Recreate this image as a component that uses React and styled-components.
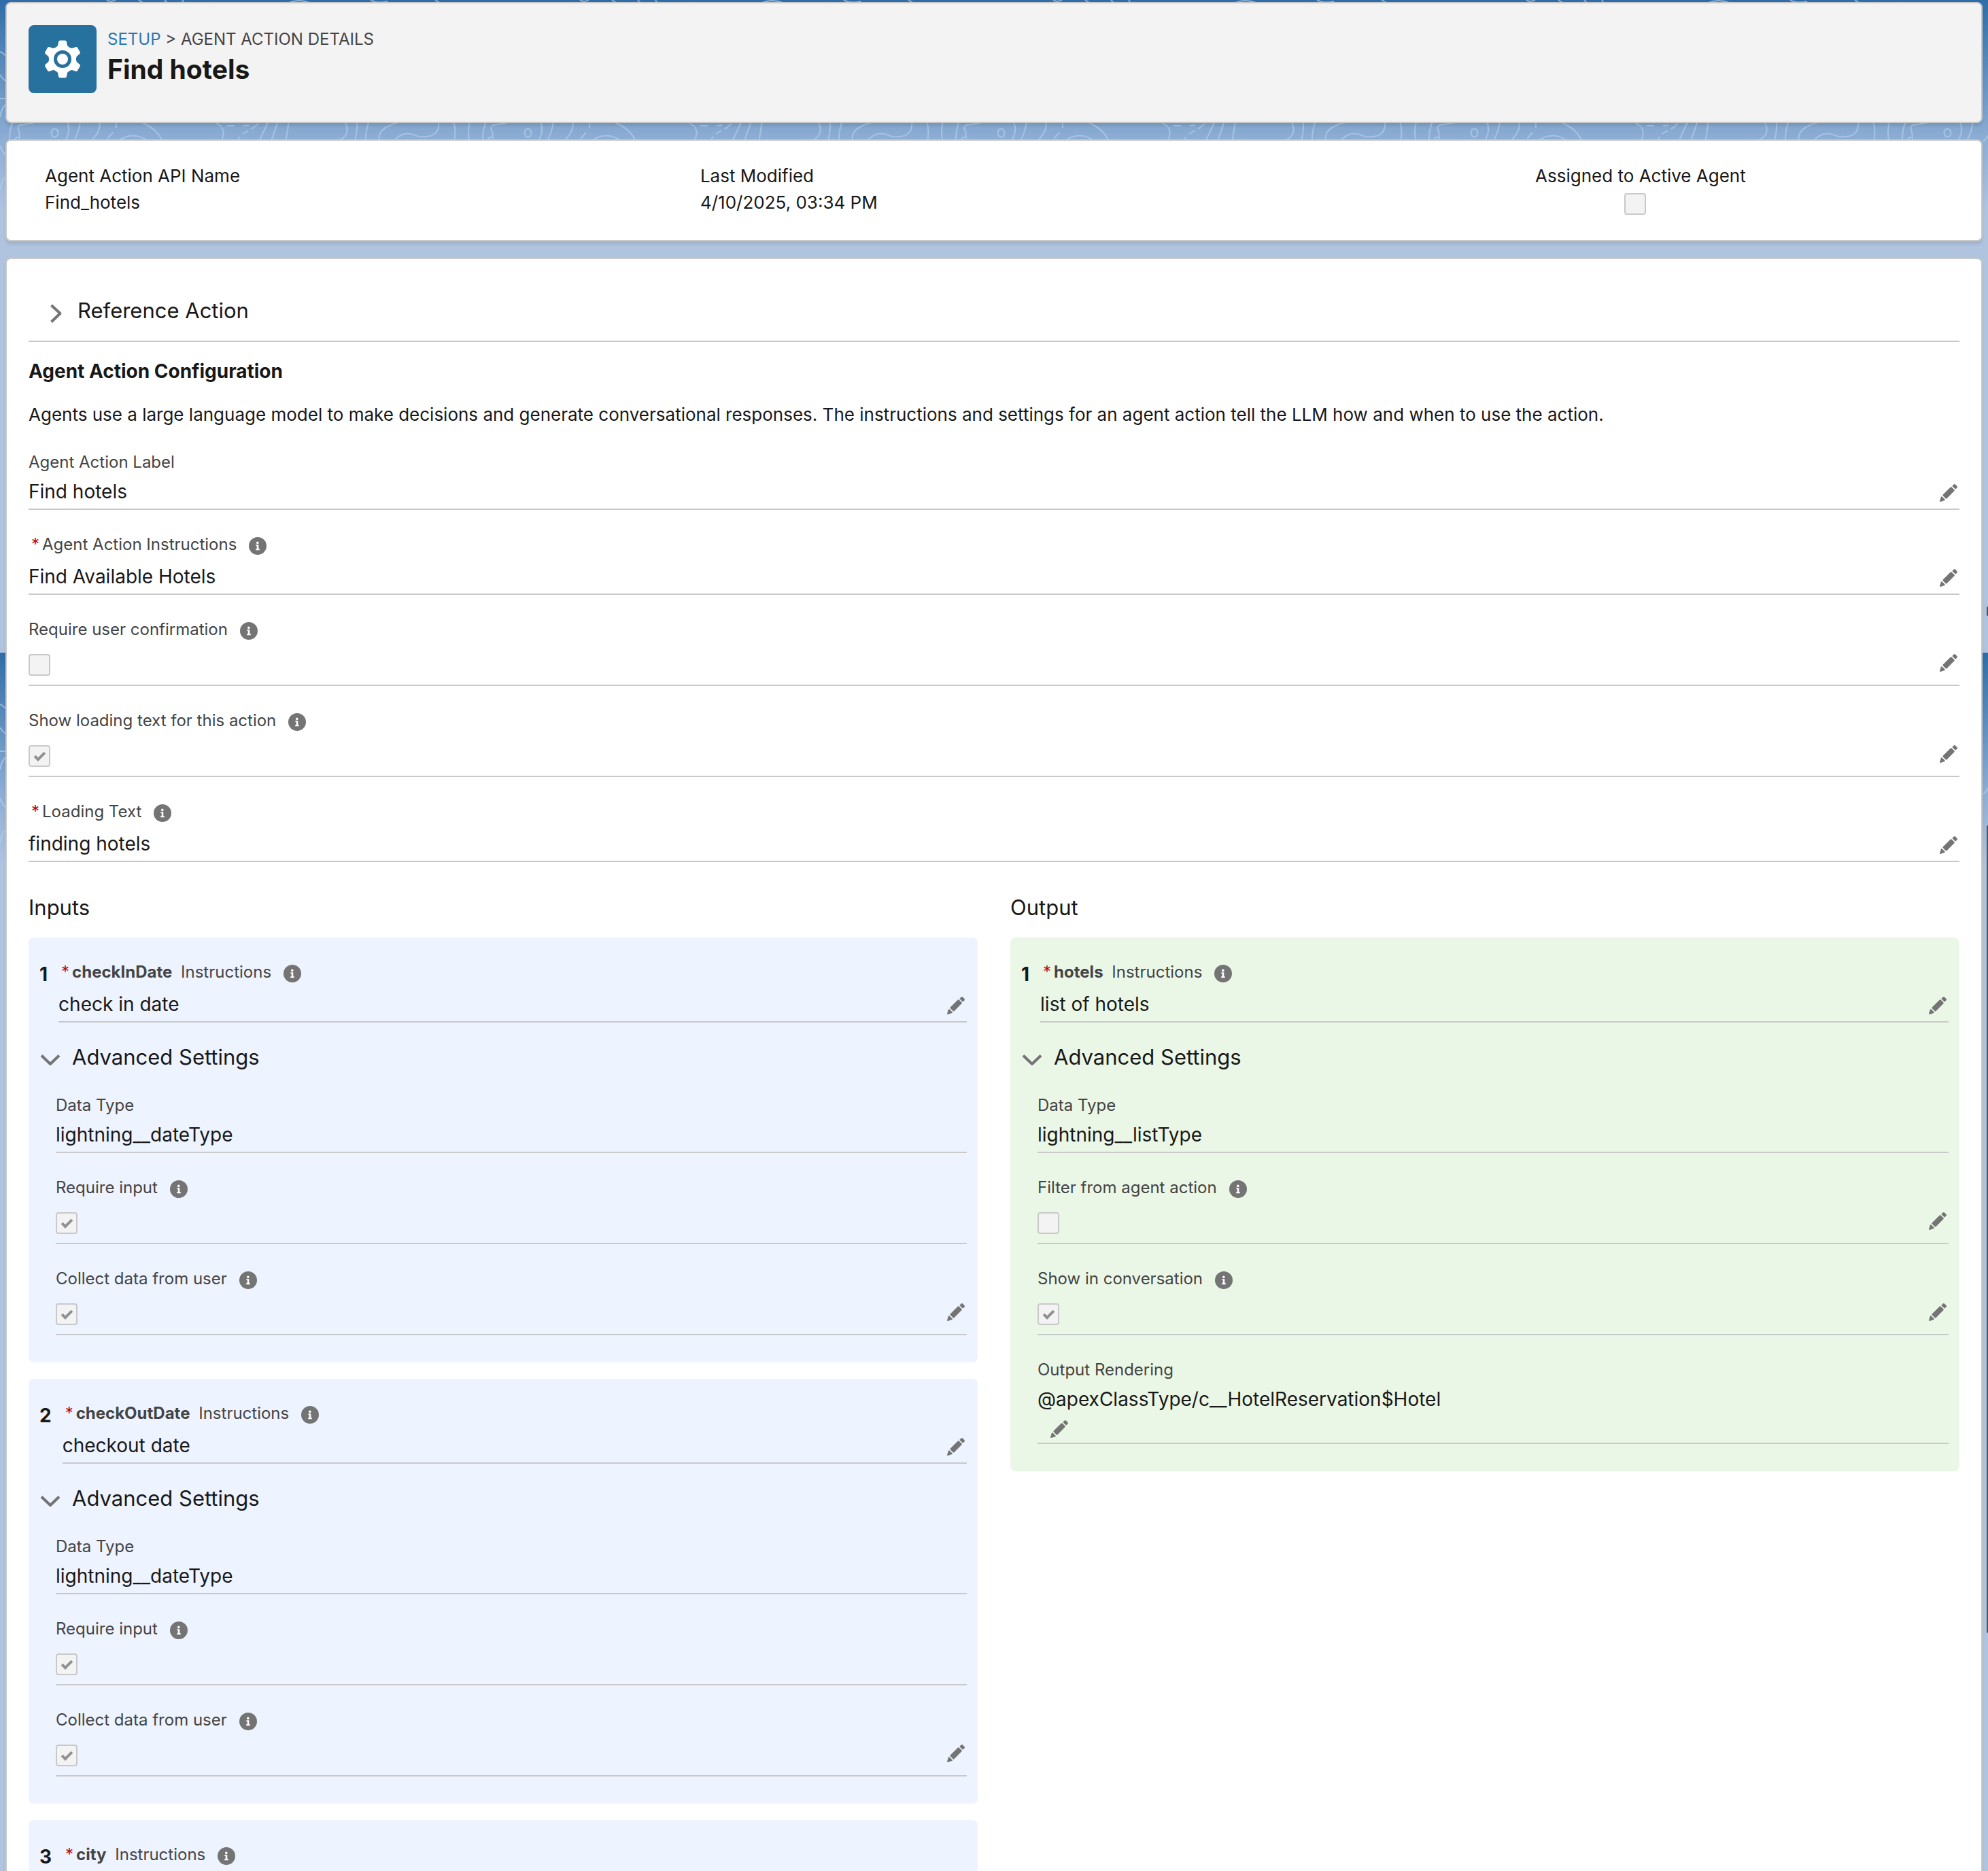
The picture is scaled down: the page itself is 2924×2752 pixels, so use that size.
import React, { useId } from "react";
import styled, { createGlobalStyle } from "styled-components";

const GlobalStyle = createGlobalStyle`
    * {
        box-sizing: border-box;
    }

    body {
        margin: 0;
        background-color: #b0c4df;
        color: #181818;
        font-family: Inter, "Liberation Sans", sans-serif;
        font-size: 26px;
        line-height: 39px;
    }

    h1, h2, h3, p {
        margin: 0;
        font-weight: 400;
    }

    button {
        background: none;
        border: 0;
        color: inherit;
        cursor: pointer;
        font: inherit;
        padding: 0;
        text-align: left;
    }

    svg {
        display: block;
    }
`;

const Page = styled.div`
    display: flex;
    flex-direction: column;
    gap: 24px;
    height: 100vh;
    overflow: hidden;
    padding: 3px 8px 0;
    position: relative;
`;

const Backdrop = styled.div`
    background: linear-gradient(#2f6da8, #8bacd3 200px, #b0c4df 310px);
    height: 320px;
    left: 0;
    position: absolute;
    right: 0;
    top: ${props => props.$top}px;
    z-index: -1;
`;

const ScrollThumb = styled.div`
    background-color: #4a5562;
    border-radius: 2px 0 0 2px;
    height: ${props => props.$height}px;
    position: absolute;
    right: 0;
    top: ${props => props.$top}px;
    width: 2px;
`;

const Card = styled.section`
    background-color: #fff;
    border: 2px solid #c9c9c9;
    border-radius: 8px;
    box-shadow: 0 4px 4px rgba(0, 0, 0, 0.1);
`;

const HeaderCard = styled(Card)`
    background-color: #f3f3f3;
    display: flex;
    gap: 16px;
    padding: 32px 32px 42px;
`;

const HeaderIcon = styled.div`
    background-color: #27719e;
    border-radius: 8px;
    height: 100px;
    width: 100px;
`;

const HeaderText = styled.div`
    padding-top: 2px;
`;

const Breadcrumb = styled.nav`
    color: #444;
    font-size: 24px;
    line-height: 38px;

    a {
        color: #2a76b0;
        text-decoration: none;
    }
`;

const Title = styled.h1`
    font-size: 39px;
    font-weight: 700;
    line-height: 50px;
`;

const SummaryCard = styled(Card)`
    display: grid;
    grid-template-columns: 23fr 23fr 20fr;
    padding: 32px 82px 36px 56px;
`;

const SummaryCheck = styled.div`
    align-items: center;
    display: flex;
    flex-direction: column;
    gap: 6px;
`;

const DetailCard = styled(Card)`
    flex: 1;
    padding: 32px;
`;

const SectionHeader = styled.div`
    border-bottom: 2px solid #c9c9c9;
    padding: 20px 0 20px 24px;
`;

const Toggle = styled.button`
    align-items: center;
    display: flex;
    font-size: 31px;
    gap: 16px;
    line-height: 48px;
`;

const ConfigTitle = styled.h2`
    font-size: 28px;
    font-weight: 700;
    line-height: 42px;
    margin: 22px 0 23px;
`;

const FieldBox = styled.div`
    border-bottom: 2px solid #c9c9c9;
    margin-top: ${props => (props.$first ? 0 : 32)}px;
    padding-bottom: 3px;
`;

const LabelRow = styled.div`
    color: #444;
    display: flex;
    font-size: 24px;
    line-height: 38px;
    margin-bottom: 2px;

    strong {
        margin-right: 6px;
    }
`;

const Required = styled.abbr`
    color: #ba0517;
    margin: 0 4px;
    text-decoration: none;
`;

const InfoButton = styled.button`
    height: 26px;
    margin: 8px 0 8px 18px;
`;

const ValueRow = styled.div`
    display: flex;
    flex-direction: ${props => (props.$wrap ? "column" : "row")};
    justify-content: space-between;
`;

const Value = styled.span`
    font-size: 28px;
    line-height: 44px;
`;

const EditButton = styled.button`
    height: 26px;
    margin: ${props => (props.$wrap ? "9px 0 4px 19px" : "11px 3px 0 0")};
    width: 26px;
`;

const Checkbox = styled.input`
    appearance: none;
    background-color: #f3f3f3;
    border: 2px solid #c9c9c9;
    border-radius: 4px;
    display: grid;
    height: 32px;
    margin: 0;
    place-items: center;
    width: 32px;

    &:checked::after {
        border: solid #919191;
        border-width: 0 4px 4px 0;
        box-sizing: border-box;
        content: "";
        height: 16px;
        margin-bottom: 2px;
        transform: rotate(45deg);
        width: 9px;
    }
`;

const SummaryCheckbox = styled(Checkbox)`
    margin-right: 16px;
`;

const FieldCheckbox = styled(Checkbox)`
    margin: 11px 0 10px;
`;

const Columns = styled.div`
    align-items: start;
    display: grid;
    gap: 48px;
    grid-template-columns: 1fr 1fr;
    margin-top: 43px;
`;

const ColumnTitle = styled.h2`
    font-size: 31px;
    line-height: 48px;
    margin-bottom: 20px;
`;

const PanelList = styled.div`
    display: grid;
    gap: 24px;
`;

const Panel = styled.article`
    background-color: ${props => (props.$output ? "#ebf7e6" : "#edf3ff")};
    border-radius: 8px;
    padding: 32px 16px 40px;
`;

const PanelHead = styled.div`
    display: flex;
    gap: 16px;
`;

const PanelNumber = styled.span`
    font-size: 28px;
    font-weight: 700;
    line-height: 44px;
`;

const PanelField = styled.div`
    flex: 1;
`;

const PanelToggle = styled(Toggle)`
    margin: 27px 0 28px;
`;

const PanelBody = styled.div`
    padding-left: 24px;
`;

const GearIcon = () => (
    <svg viewBox="0 0 100 100" width="100" height="100" aria-hidden="true">
        <g fill="#fff" stroke="#fff" strokeWidth="5" strokeLinejoin="round">
            <circle cx="50" cy="50" r="17.5" />
            {[0, 60, 120, 180, 240, 300].map(angle => (
                <path
                    key={angle}
                    d="M41 36 L45.5 31 L46.5 25 H53.5 L54.5 31 L59 36 Z"
                    transform={`rotate(${angle} 50 50)`}
                />
            ))}
        </g>
        <circle cx="50" cy="50" r="10.5" fill="#fff" stroke="#27719e" strokeWidth="5" />
    </svg>
);

const PencilIcon = () => (
    <svg viewBox="0 0 26 26" width="26" height="26" fill="#747474" aria-hidden="true">
        <path d="M18.9 2.2 L20.5 .7 Q21.9 -.5 23.2 .7 L25.4 2.9 Q26.6 4.2 25.4 5.5 L23.8 7.1 Q23.1 7.7 22.4 7.1 L18.9 3.6 Q18.2 2.9 18.9 2.2 Z" />
        <path d="M15.9 4.5 Q16.7 3.8 17.5 4.5 L21.5 8.5 Q22.3 9.3 21.5 10.1 L10.4 21.2 Q9.6 22 8.8 21.2 L4.8 17.2 Q4 16.4 4.8 15.6 Z" />
        <path d="M1.9 18.8 Q2.5 17.7 3.5 18.6 L7.5 22.6 Q8.3 23.6 7.2 24.1 L1.2 25.9 Q-.2 26.2 .1 24.8 Z" />
    </svg>
);

const InfoIcon = () => (
    <svg viewBox="0 0 26 26" width="26" height="26" aria-hidden="true">
        <circle cx="13" cy="13" r="13" fill="#747474" />
        <circle cx="12.8" cy="8.4" r="1.8" fill="#fff" />
        <path d="M10.4 11.3 H14.3 V17.3 H15.8 V19.2 H10.2 V17.3 H11.7 V13.1 H10.4 Z" fill="#fff" />
    </svg>
);

const Chevron = ({ open }) => (
    <svg viewBox="0 0 32 32" width="32" height="32" overflow="visible" aria-hidden="true">
        <polyline
            points={open ? "3,13.5 16,26 29,13.5" : "9.5,8 22.5,20 9.5,32.5"}
            fill="none"
            stroke="#747474"
            strokeWidth="4"
            strokeLinejoin="round"
        />
    </svg>
);

const Contours = () => {
    const id = useId();
    return (
        <svg width="100%" height="320" aria-hidden="true">
            <defs>
                <pattern id={id} width="696" height="320" patternUnits="userSpaceOnUse">
                    <g fill="none" stroke="#b4cdea" strokeOpacity=".7" strokeWidth="2">
                        <path d="M60 178 Q40 183 29 184 Q24 187 28 193 L29 203 Q24 199 21 207" />
                        <path d="M20 176 Q13 192 14 210" />
                        <ellipse cx="80.5" cy="195.5" rx="5" ry="6" />
                        <path d="M98 178 Q106 192 94 210" />
                        <path d="M118 178 Q116 196 107 210" />
                        <path d="M146 178 Q150 192 133 208" />
                        <path d="M171 180 V188 M166 195 L158 204" />
                        <path d="M174 207 Q196 192 217 207" />
                        <path d="M210 181 Q232 190 240 210" />
                        <path d="M316 178 Q322 186 326 185 M326 187 Q332 196 324 210 M334 185 H345 M358 185 L366 184" />
                        <path d="M380 182 L370 190 M365 192 L357 197 M353 201 L348 208" />
                        <path d="M395 178 L380 210 M409 178 L398 210 M425 178 L420 210" />
                        <path d="M507 178 Q518 200 496 207" />
                        <path d="M525 178 Q526 194 521 210" />
                        <path d="M543 178 Q537 194 538 210" />
                        <path d="M590 179 Q551 188 559 210" />
                        <path d="M645 178 Q648 204 616 201 Q600 194 592 198 Q582 202 578 210" />
                        <path d="M667 178 Q672 196 667 210" />
                        <path d="M691 178 Q687 196 691 210" />
                        <path d="M0 76 Q6 79 8 82 M0 110 Q4 116 8 119 M0 145 H8 M0 172 Q2 160 8 154 M0 214 Q3 222 8 228 M0 280 Q2 268 8 260" />
                        <path d="M157 0 Q163 4 170 0 M204 0 L212 5 M242 0 L248 6 M268 0 L272 6 M425 4 Q440 -2 455 4 M545 0 Q555 6 570 2 M640 0 L650 6" />
                    </g>
                </pattern>
            </defs>
            <rect width="100%" height="320" fill={`url(#${id})`} />
        </svg>
    );
};

const Field = ({ label, name, required, info, value, check, editable, wrap, first }) => {
    const id = useId();
    const isCheckbox = check !== undefined;
    return (
        <FieldBox $first={first}>
            <LabelRow>
                {required && <Required title="required">*</Required>}
                <label htmlFor={isCheckbox ? id : undefined}>
                    {name && <strong>{name}</strong>}
                    {name && " "}
                    {label}
                </label>
                {info && (
                    <InfoButton type="button" aria-label={`Help for ${label}`}>
                        <InfoIcon />
                    </InfoButton>
                )}
            </LabelRow>
            <ValueRow $wrap={wrap}>
                {isCheckbox ? (
                    <FieldCheckbox type="checkbox" id={id} checked={check} disabled readOnly />
                ) : (
                    <Value>{value}</Value>
                )}
                {editable && (
                    <EditButton type="button" $wrap={wrap} aria-label={`Edit ${name || label}`}>
                        <PencilIcon />
                    </EditButton>
                )}
            </ValueRow>
        </FieldBox>
    );
};

const configFields = [
    { label: "Agent Action Label", value: "Find hotels", editable: true },
    { label: "Agent Action Instructions", required: true, info: true, value: "Find Available Hotels", editable: true },
    { label: "Require user confirmation", info: true, check: false, editable: true },
    { label: "Show loading text for this action", info: true, check: true, editable: true },
    { label: "Loading Text", required: true, info: true, value: "finding hotels", editable: true }
];

const dateSettings = [
    { label: "Data Type", value: "lightning__dateType" },
    { label: "Require input", info: true, check: true },
    { label: "Collect data from user", info: true, check: true, editable: true }
];

const inputs = [
    { name: "checkInDate", value: "check in date", settings: dateSettings },
    { name: "checkOutDate", value: "checkout date", settings: dateSettings },
    { name: "city", settings: [] }
];

const outputs = [
    {
        name: "hotels",
        value: "list of hotels",
        settings: [
            { label: "Data Type", value: "lightning__listType" },
            { label: "Filter from agent action", info: true, check: false, editable: true },
            { label: "Show in conversation", info: true, check: true, editable: true },
            { label: "Output Rendering", value: "@apexClassType/c__HotelReservation$Hotel", editable: true, wrap: true }
        ]
    }
];

const ParameterPanel = ({ number, parameter, output }) => (
    <Panel $output={output}>
        <PanelHead>
            <PanelNumber>{number}</PanelNumber>
            <PanelField>
                <Field first required info editable name={parameter.name} label="Instructions" value={parameter.value} />
            </PanelField>
        </PanelHead>
        {parameter.settings.length > 0 && (
            <>
                <PanelToggle type="button" aria-expanded="true">
                    <Chevron open />
                    Advanced Settings
                </PanelToggle>
                <PanelBody>
                    {parameter.settings.map((field, index) => (
                        <Field key={field.label} first={index === 0} {...field} />
                    ))}
                </PanelBody>
            </>
        )}
    </Panel>
);

const ParameterColumn = ({ title, items, output }) => (
    <div>
        <ColumnTitle>{title}</ColumnTitle>
        <PanelList>
            {items.map((item, index) => (
                <ParameterPanel key={item.name} number={index + 1} parameter={item} output={output} />
            ))}
        </PanelList>
    </div>
);

const App = () => (
    <Page>
        <GlobalStyle />
        <Backdrop $top={0}>
            <Contours />
        </Backdrop>
        <Backdrop $top={960}>
            <Contours />
        </Backdrop>
        <HeaderCard as="header">
            <HeaderIcon>
                <GearIcon />
            </HeaderIcon>
            <HeaderText>
                <Breadcrumb>
                    <a href="#setup">SETUP</a> &gt; AGENT ACTION DETAILS
                </Breadcrumb>
                <Title>Find hotels</Title>
            </HeaderText>
        </HeaderCard>
        <SummaryCard>
            <div>
                <p>Agent Action API Name</p>
                <p>Find_hotels</p>
            </div>
            <div>
                <p>Last Modified</p>
                <p>4/10/2025, 03:34 PM</p>
            </div>
            <SummaryCheck>
                <label htmlFor="assigned">Assigned to Active Agent</label>
                <SummaryCheckbox type="checkbox" id="assigned" disabled />
            </SummaryCheck>
        </SummaryCard>
        <DetailCard as="main">
            <SectionHeader>
                <Toggle type="button" aria-expanded="false">
                    <Chevron />
                    Reference Action
                </Toggle>
            </SectionHeader>
            <ConfigTitle>Agent Action Configuration</ConfigTitle>
            <p>
                Agents use a large language model to make decisions and generate conversational responses. The
                instructions and settings for an agent action tell the LLM how and when to use the action.
            </p>
            {configFields.map(field => <Field key={field.label} {...field} />)}
            <Columns>
                <ParameterColumn title="Inputs" items={inputs} />
                <ParameterColumn title="Output" items={outputs} output />
            </Columns>
        </DetailCard>
        <ScrollThumb $top={892} $height={14} />
        <ScrollThumb $top={1214} $height={1188} />
    </Page>
);

export default App;
